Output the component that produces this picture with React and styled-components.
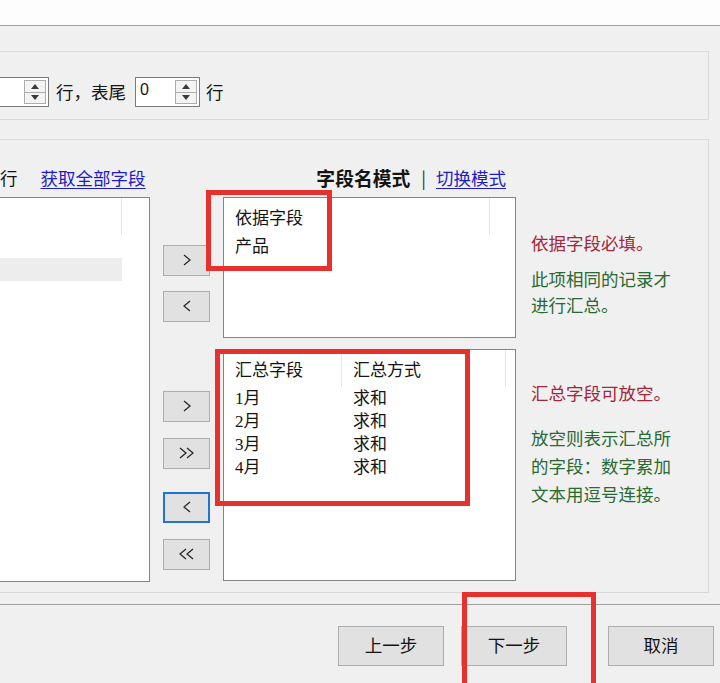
import React from "react";
import styled, { createGlobalStyle } from "styled-components";

const GlobalStyle = createGlobalStyle`
  html, body {
    margin: 0;
    padding: 0;
    background: #f0f0f0;
    overflow: hidden;
  }
  body {
    font-family: "Noto Sans CJK SC", "Noto Sans", sans-serif;
  }
`;

const Window = styled.div`
  position: relative;
  width: 720px;
  height: 683px;
  overflow: hidden;
  background: #f0f0f0;
  color: #141414;
  font-size: 17px;
`;

const TitleStrip = styled.div`
  height: 25px;
  background: #fdfdfd;
  border-bottom: 1px solid #a3a3a3;
`;

const GroupBox = styled.div`
  box-sizing: border-box;
  margin: ${(p) => p.$top}px 11px 0 -20px;
  height: ${(p) => p.$height}px;
  border: 1px solid #dadada;
  padding-top: ${(p) => p.$pad}px;
`;

const SpinRow = styled.div`
  display: flex;
  align-items: center;
  height: 30px;
`;

const Spin = styled.div`
  box-sizing: border-box;
  display: flex;
  width: ${(p) => p.$w}px;
  height: 30px;
  margin-left: ${(p) => p.$ml || 0}px;
  padding: 2px;
  background: #fff;
  border: 1px solid #7a7a7a;
`;

const SpinValue = styled.div`
  flex: 1;
  padding-left: 2px;
  font-family: "Liberation Sans", sans-serif;
  font-size: 16px;
  line-height: 20px;
`;

const SpinArrows = styled.div`
  display: flex;
  flex-direction: column;
  width: 20px;
  border: 1px solid #adadad;
  background: #f3f3f3;
`;

const SpinHalf = styled.div`
  flex: 1;
  display: flex;
  align-items: center;
  justify-content: center;
  & + & {
    border-top: 1px solid #adadad;
  }
`;

const Tri = styled.span`
  width: 0;
  height: 0;
  border-left: 4px solid transparent;
  border-right: 4px solid transparent;
  ${(p) =>
    p.$down
      ? "border-top: 5px solid #3a3a3a;"
      : "border-bottom: 5px solid #3a3a3a;"}
`;

const Label = styled.span`
  margin-left: ${(p) => p.$ml || 0}px;
  white-space: nowrap;
  line-height: 22px;
  font-size: 17.5px;
`;

const HeaderRow = styled.div`
  display: flex;
  align-items: center;
  height: 22px;
  line-height: 22px;
  padding-left: 19px;
  font-size: 17.5px;
`;

const LinkText = styled.span`
  margin-left: ${(p) => p.$ml || 0}px;
  color: #1c1cc8;
  text-decoration: underline;
  text-underline-offset: 3px;
  white-space: nowrap;
`;

const ModeGroup = styled.div`
  display: flex;
  align-items: center;
  margin-left: auto;
  margin-right: 202px;
`;

const Bold = styled.span`
  font-weight: 700;
  font-size: 18.8px;
`;

const Pipe = styled.span`
  margin: 0 10px 0 11px;
  color: #333;
`;

const Content = styled.div`
  display: flex;
  margin-top: 8px;
`;

const ListBox = styled.div`
  box-sizing: border-box;
  width: ${(p) => p.$w}px;
  height: ${(p) => p.$h}px;
  background: #fff;
  border: 1px solid #848484;
  overflow: hidden;
`;

const ListHead = styled.div`
  display: flex;
  height: 37px;
`;

const HeadCell = styled.div`
  box-sizing: border-box;
  width: ${(p) => p.$w}px;
  padding-left: 11px;
  line-height: 37px;
  border-right: 1px solid #e6e6e6;
  white-space: nowrap;
`;

const ListRow = styled.div`
  display: flex;
  height: 23px;
  line-height: 23px;
`;

const Cell = styled.div`
  box-sizing: border-box;
  width: ${(p) => p.$w}px;
  padding-left: 11px;
  background: ${(p) => (p.$selected ? "#ededed" : "transparent")};
  font-family: "Liberation Serif", "Noto Sans CJK SC", serif;
  white-space: nowrap;
`;

const RightCol = styled.div`
  display: flex;
  flex-direction: column;
  margin-left: 13px;
`;

const PairRow = styled.div`
  display: flex;
  margin-top: ${(p) => p.$mt || 0}px;
`;

const ArrowCol = styled.div`
  display: flex;
  flex-direction: column;
  width: 47px;
  margin-right: 13px;
`;

const ArrowButton = styled.div`
  box-sizing: border-box;
  display: flex;
  align-items: center;
  justify-content: center;
  width: 47px;
  height: 31px;
  margin-top: ${(p) => p.$mt}px;
  padding-bottom: 2px;
  background: #e1e1e1;
  border: ${(p) => (p.$focused ? "2px solid #1f74d6" : "1px solid #adadad")};
  color: #2a2a2a;
`;

const Hints = styled.div`
  margin-left: 15px;
  padding-top: ${(p) => p.$pt}px;
  font-size: 17.5px;
`;

const Hint = styled.div`
  color: ${(p) => (p.$tone === "red" ? "#a3263a" : "#2a6a32")};
  line-height: ${(p) => p.$lh}px;
  margin-top: ${(p) => p.$mt || 0}px;
  white-space: nowrap;
`;

const Footer = styled.div`
  display: flex;
  margin-top: 11px;
  padding: 21px 0 0 338px;
  border-top: 1px solid #a0a0a0;
`;

const DialogButton = styled.div`
  box-sizing: border-box;
  display: flex;
  align-items: center;
  justify-content: center;
  width: 106px;
  height: 40px;
  margin-left: ${(p) => p.$ml || 0}px;
  padding-bottom: 3px;
  background: #e1e1e1;
  border: 1px solid #adadad;
  font-size: 17.5px;
`;

const Mark = styled.div`
  position: absolute;
  box-sizing: border-box;
  left: ${(p) => p.$x}px;
  top: ${(p) => p.$y}px;
  width: ${(p) => p.$w}px;
  height: ${(p) => p.$h}px;
  border: 5px solid #e5322f;
  pointer-events: none;
`;

function Chevrons({ left, count = 1 }) {
  const w = 6 + (count - 1) * 7;
  return (
    <svg width={w + 2} height="12" viewBox={`0 0 ${w + 2} 12`}>
      {Array.from({ length: count }).map((_, i) => {
        const x = 1 + i * 7;
        const d = left
          ? `M${x + 6} 1 L${x} 6 L${x + 6} 11`
          : `M${x} 1 L${x + 6} 6 L${x} 11`;
        return (
          <path
            key={i}
            d={d}
            fill="none"
            stroke="#2a2a2a"
            strokeWidth="1.3"
            strokeLinejoin="miter"
          />
        );
      })}
    </svg>
  );
}

function SpinBox({ value, width, ml }) {
  return (
    <Spin $w={width} $ml={ml}>
      <SpinValue>{value}</SpinValue>
      <SpinArrows>
        <SpinHalf>
          <Tri />
        </SpinHalf>
        <SpinHalf>
          <Tri $down />
        </SpinHalf>
      </SpinArrows>
    </Spin>
  );
}

const sumRows = [
  ["1月", "求和"],
  ["2月", "求和"],
  ["3月", "求和"],
  ["4月", "求和"],
];

export default function App() {
  return (
    <Window>
      <GlobalStyle />
      <TitleStrip />

      <GroupBox $top={25} $height={69} $pad={25}>
        <SpinRow>
          <SpinBox value="" width={68} />
          <Label $ml={7}>行，表尾</Label>
          <SpinBox value="0" width={65} ml={9} />
          <Label $ml={6}>行</Label>
        </SpinRow>
      </GroupBox>

      <GroupBox $top={19} $height={454} $pad={27}>
        <HeaderRow>
          <span>行</span>
          <LinkText $ml={23}>获取全部字段</LinkText>
          <ModeGroup>
            <Bold>字段名模式</Bold>
            <Pipe>|</Pipe>
            <LinkText>切换模式</LinkText>
          </ModeGroup>
        </HeaderRow>

        <Content>
          <ListBox $w={169} $h={385}>
            <ListHead>
              <HeadCell $w={140} />
            </ListHead>
            <ListRow>
              <Cell $w={140} />
            </ListRow>
            <ListRow>
              <Cell $w={140} $selected />
            </ListRow>
          </ListBox>

          <RightCol>
            <PairRow>
              <ArrowCol>
                <ArrowButton $mt={48}>
                  <Chevrons />
                </ArrowButton>
                <ArrowButton $mt={15}>
                  <Chevrons left />
                </ArrowButton>
              </ArrowCol>
              <ListBox $w={293} $h={141}>
                <ListHead>
                  <HeadCell $w={266}>依据字段</HeadCell>
                </ListHead>
                <ListRow>
                  <Cell $w={266}>产品</Cell>
                </ListRow>
              </ListBox>
              <Hints $pt={33}>
                <Hint $tone="red" $lh={26}>依据字段必填。</Hint>
                <Hint $tone="green" $lh={26} $mt={10}>
                  此项相同的记录才
                  <br />
                  进行汇总。
                </Hint>
              </Hints>
            </PairRow>

            <PairRow $mt={11}>
              <ArrowCol>
                <ArrowButton $mt={42}>
                  <Chevrons />
                </ArrowButton>
                <ArrowButton $mt={16}>
                  <Chevrons count={2} />
                </ArrowButton>
                <ArrowButton $mt={23} $focused>
                  <Chevrons left />
                </ArrowButton>
                <ArrowButton $mt={16}>
                  <Chevrons left count={2} />
                </ArrowButton>
              </ArrowCol>
              <ListBox $w={293} $h={232}>
                <ListHead>
                  <HeadCell $w={118}>汇总字段</HeadCell>
                  <HeadCell $w={164}>汇总方式</HeadCell>
                </ListHead>
                {sumRows.map(([field, mode]) => (
                  <ListRow key={field}>
                    <Cell $w={118}>{field}</Cell>
                    <Cell $w={164}>{mode}</Cell>
                  </ListRow>
                ))}
              </ListBox>
              <Hints $pt={31}>
                <Hint $tone="red" $lh={26}>汇总字段可放空。</Hint>
                <Hint $tone="green" $lh={28} $mt={18}>
                  放空则表示汇总所
                  <br />
                  的字段：数字累加
                  <br />
                  文本用逗号连接。
                </Hint>
              </Hints>
            </PairRow>
          </RightCol>
        </Content>
      </GroupBox>

      <Footer>
        <DialogButton>上一步</DialogButton>
        <DialogButton $ml={17}>下一步</DialogButton>
        <DialogButton $ml={41}>取消</DialogButton>
      </Footer>

      <Mark $x={206} $y={190} $w={126} $h={81} />
      <Mark $x={215} $y={349} $w={255} $h={157} />
      <Mark $x={462} $y={592} $w={134} $h={100} />
    </Window>
  );
}
